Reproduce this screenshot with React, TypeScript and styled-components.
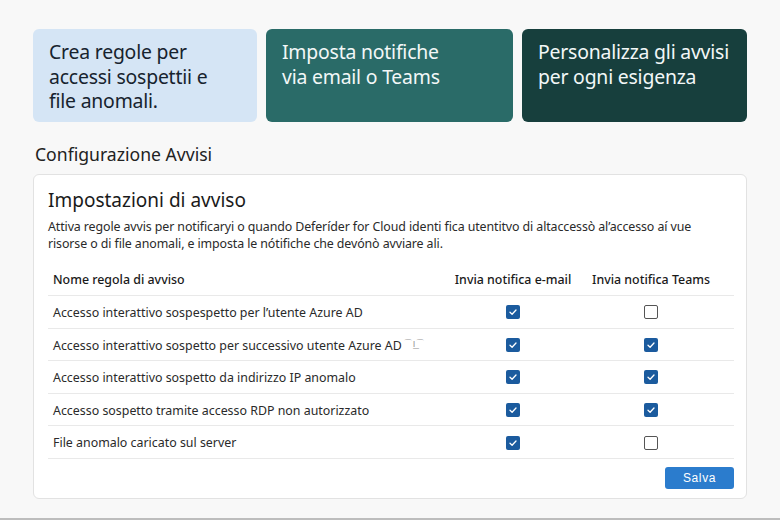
import React from "react";
import styled, { createGlobalStyle } from "styled-components";

const Global = createGlobalStyle`
  html, body { margin: 0; padding: 0; }
  body {
    background: #f8f8f8;
    font-family: "Noto Sans", "Open Sans", "DejaVu Sans", sans-serif;
    color: #1f1f1f;
  }
`;

const Page = styled.div`
  width: 780px;
  height: 520px;
  box-sizing: border-box;
  padding: 29px 0 0 33px;
  border-bottom: 2px solid #bdbdbd;
  display: flex;
  flex-direction: column;
`;

const Cards = styled.div`
  display: grid;
  grid-template-columns: 224px 247px 225px;
  column-gap: 9px;
  height: 93px;
`;

const Card = styled.div<{ $bg: string; $fg: string }>`
  box-sizing: border-box;
  height: 93px;
  background: ${(p) => p.$bg};
  color: ${(p) => p.$fg};
  border-radius: 6px;
  padding: 11px 16px;
  font-size: 19.4px;
  line-height: 24.5px;
  letter-spacing: -0.2px;
  white-space: nowrap;
`;

const SectionTitle = styled.div`
  margin-top: 21px;
  margin-left: 2px;
  font-size: 17.6px;
  line-height: 22px;
  color: #222;
`;

const Panel = styled.div`
  margin-top: 9px;
  width: 714px;
  height: 325px;
  box-sizing: border-box;
  background: #fff;
  border: 1px solid #e2e2e2;
  border-radius: 6px;
  padding: 12px 12px 0 14px;
  display: flex;
  flex-direction: column;
`;

const PanelTitle = styled.div`
  font-size: 19px;
  line-height: 26px;
  color: #1a1a1a;
`;

const Desc = styled.div`
  margin-top: 5px;
  font-size: 12.4px;
  line-height: 17px;
  color: #2a2a2a;
  letter-spacing: -0.1px;
`;

const Row = styled.div<{ $head?: boolean }>`
  box-sizing: border-box;
  display: grid;
  grid-template-columns: 396px 138px 138px 1fr;
  align-items: center;
  height: ${(p) => (p.$head ? "34px" : "32.6px")};
  padding-top: ${(p) => (p.$head ? "2px" : "1px")};
  border-bottom: 1px solid #e9e9e9;
  font-size: 12.4px;
  color: ${(p) => (p.$head ? "#1a1a1a" : "#2a2a2a")};
  font-weight: ${(p) => (p.$head ? 500 : 400)};
`;

const Table = styled.div`
  margin-top: 10px;
  display: flex;
  flex-direction: column;
`;

const NameCell = styled.div`
  padding-left: 5px;
  white-space: nowrap;
`;

const Center = styled.div`
  display: flex;
  justify-content: center;
  white-space: nowrap;
`;

const Glitch = styled.span`
  color: #9a9a9a;
  font-size: 10px;
  vertical-align: 3px;
  margin-left: 1px;
`;

const Box = styled.span<{ $on: boolean }>`
  width: 14px;
  height: 14px;
  box-sizing: border-box;
  border-radius: 2px;
  display: inline-flex;
  align-items: center;
  justify-content: center;
  background: ${(p) => (p.$on ? "#1b5b9e" : "#fff")};
  border: ${(p) => (p.$on ? "none" : "1.5px solid #555")};
`;

const Footer = styled.div`
  display: flex;
  justify-content: flex-end;
  margin-top: 8px;
`;

const Button = styled.button`
  width: 69px;
  height: 22px;
  border: none;
  border-radius: 3px;
  background: #2b7ccd;
  color: #fff;
  font-family: "Liberation Sans", Arial, sans-serif;
  font-size: 12px;
  letter-spacing: 0.6px;
  padding: 0;
`;

const Check = ({ on }: { on: boolean }) => (
  <Box $on={on}>
    {on && (
      <svg width="10" height="10" viewBox="0 0 10 10">
        <path d="M2 5.2 L4.1 7.2 L8 3" fill="none" stroke="#fff" strokeWidth="1.3" strokeLinecap="round" strokeLinejoin="round" />
      </svg>
    )}
  </Box>
);

const rules: { name: React.ReactNode; email: boolean; teams: boolean }[] = [
  { name: "Accesso interattivo sospespetto per l’utente Azure AD", email: true, teams: false },
  {
    name: (
      <>
        Accesso interattivo sospetto per successivo utente Azure AD<Glitch>⌒ı͟⌒</Glitch>
      </>
    ),
    email: true,
    teams: true,
  },
  { name: "Accesso interattivo sospetto da indirizzo IP anomalo", email: true, teams: true },
  { name: "Accesso sospetto tramite accesso RDP non autorizzato", email: true, teams: true },
  { name: "File anomalo caricato sul server", email: true, teams: false },
];

export default function App() {
  return (
    <>
      <Global />
      <Page>
        <Cards>
          <Card $bg="#d5e5f5" $fg="#17232e">
            Crea regole per
            <br />
            accessi sospettii e
            <br />
            file anomali.
          </Card>
          <Card $bg="#2a6b68" $fg="#f2f7f7">
            Imposta notifiche
            <br />
            via email o Teams
          </Card>
          <Card $bg="#173f3d" $fg="#f2f7f7">
            Personalizza gli avvisi
            <br />
            per ogni esigenza
          </Card>
        </Cards>
        <SectionTitle>Configurazione Avvisi</SectionTitle>
        <Panel>
          <PanelTitle>Impostazioni di avviso</PanelTitle>
          <Desc>
            Attiva regole avvis per notificaryi o quando Deferíder for Cloud identi fica utentitvo di altaccessò al’accesso aí vue
            <br />
            risorse o di file anomali, e imposta le nótifiche che devónò avviare ali.
          </Desc>
          <Table>
            <Row $head>
              <NameCell>Nome regola di avviso</NameCell>
              <Center>Invia notifica e-mail</Center>
              <Center>Invia notifica Teams</Center>
              <div />
            </Row>
            {rules.map((r, i) => (
              <Row key={i}>
                <NameCell>{r.name}</NameCell>
                <Center>
                  <Check on={r.email} />
                </Center>
                <Center>
                  <Check on={r.teams} />
                </Center>
                <div />
              </Row>
            ))}
          </Table>
          <Footer>
            <Button>Salva</Button>
          </Footer>
        </Panel>
      </Page>
    </>
  );
}
